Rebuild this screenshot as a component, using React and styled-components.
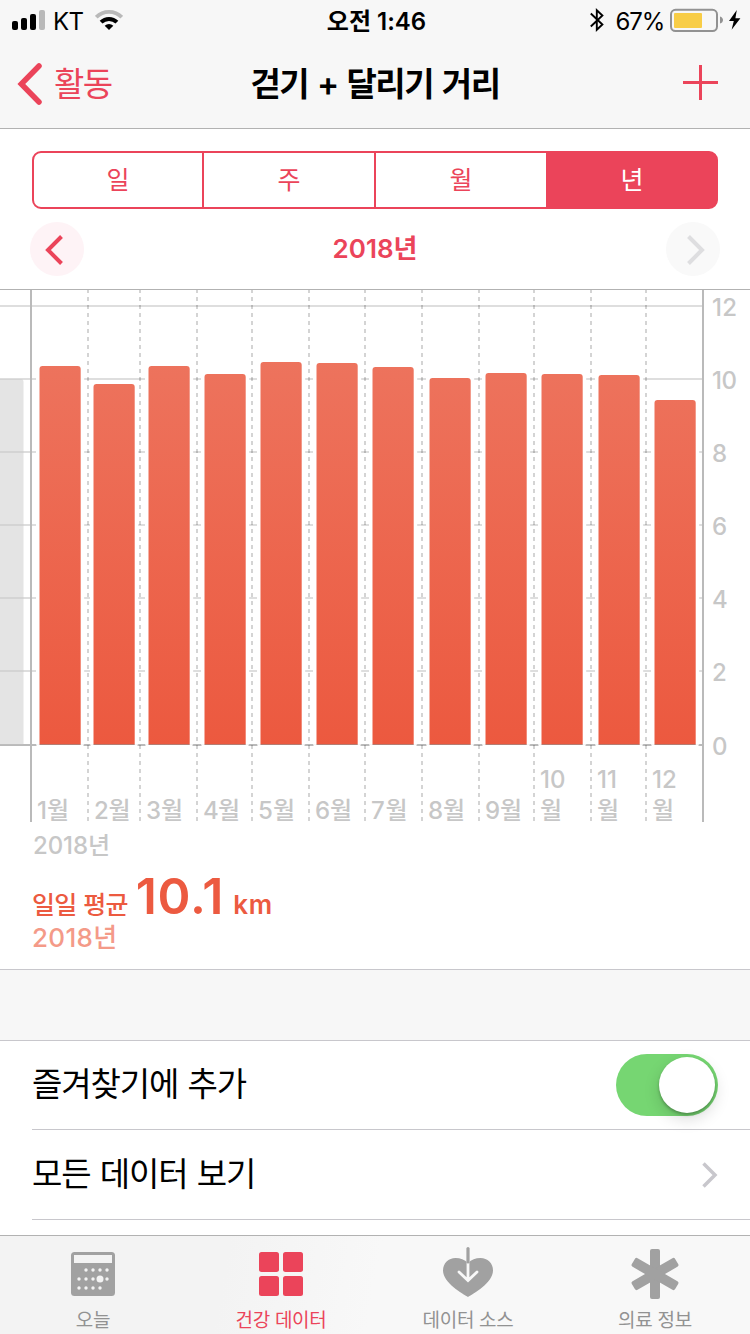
import React from 'react';
import styled, { createGlobalStyle, css } from 'styled-components';

const colors = {
  pink: '#eb445a',
  orange: '#ec5a40',
  bar: '#f7f7f7',
  line: '#c8c7cc',
  hairline: '#b2b2b2',
  axis: '#c7c7c7',
  grey: '#929292',
};

const fontStack = `Inter, 'Noto Sans CJK KR', sans-serif`;

const GlobalStyle = createGlobalStyle`
  * {
    box-sizing: border-box;
  }
  body {
    margin: 0;
    background: #fff;
    font-family: ${fontStack};
    color: #000;
  }
`;

const flexCenter = css`
  display: flex;
  align-items: center;
  justify-content: center;
`;

const Screen = styled.div`
  width: 750px;
  height: 1334px;
  overflow: hidden;
  display: flex;
  flex-direction: column;
  background: #fff;
`;

const Text = styled.span`
  display: block;
  white-space: nowrap;
  line-height: 1;
  font-size: ${p => p.$size}px;
  font-weight: ${p => p.$weight || 400};
  letter-spacing: ${p => p.$spacing || 0}px;
  word-spacing: ${p => p.$words || 0}px;
  color: ${p => p.$color || 'inherit'};
`;

const Header = styled.header`
  flex: none;
  height: 129px;
  background: ${colors.bar};
  border-bottom: 1px solid ${colors.hairline};
`;

const StatusBar = styled.div`
  display: grid;
  grid-template-columns: 1fr auto 1fr;
  align-items: center;
  height: 40px;
  padding: 0 9px 0 12px;

  ${Text} {
    padding-top: 3px;
  }
`;

const StatusGroup = styled.div`
  display: flex;
  align-items: center;
  justify-content: ${p => (p.$end ? 'flex-end' : 'flex-start')};
`;

const Carrier = styled(Text)`
  margin: 0 12px 0 8px;
`;

const Percent = styled(Text)`
  margin: 0 6px 0 12px;
`;

const NavBar = styled.nav`
  display: grid;
  grid-template-columns: 1fr auto 1fr;
  align-items: center;
  height: 88px;
  padding: 0 16px;

  ${Text} {
    padding-top: 1px;
  }
`;

const BackButton = styled.button`
  display: flex;
  align-items: center;
  gap: 10px;
  padding: 0;
  border: 0;
  background: none;
  font-family: inherit;
  color: ${colors.pink};
`;

const AddButton = styled(BackButton)`
  justify-self: end;
  margin: 0 16px 4px 0;
`;

const Segmented = styled.div`
  flex: none;
  display: grid;
  grid-template-columns: 170px 172px 172px 1fr;
  height: 58px;
  margin: 22px 32px 0;
  border: 2px solid ${colors.pink};
  border-radius: 9px;
  background: ${colors.pink};
  overflow: hidden;
`;

const Segment = styled.button`
  ${flexCenter};
  padding: 0;
  border: 0;
  border-right: ${p => (p.$active ? 0 : 2)}px solid ${colors.pink};
  background: ${p => (p.$active ? colors.pink : '#fff')};
  color: ${p => (p.$active ? '#fff' : colors.pink)};
  font-family: inherit;
`;

const DateNav = styled.div`
  flex: none;
  display: flex;
  align-items: center;
  justify-content: space-between;
  height: 54px;
  margin: 13px 30px 0;
`;

const RoundButton = styled.button`
  ${flexCenter};
  width: 54px;
  height: 54px;
  padding: ${p => (p.$disabled ? '2px 0 0 6px' : '2px 6px 0 0')};
  border: 0;
  border-radius: 50%;
  background: ${p => (p.$disabled ? '#f9f9f9' : '#fef3f6')};
  color: ${p => (p.$disabled ? '#dedee0' : colors.pink)};
`;

const ChartArea = styled.div`
  flex: none;
  height: 577px;
  margin-top: 13px;

  svg {
    display: block;
  }
`;

const Summary = styled.div`
  flex: none;
  height: 103px;
  padding: 5px 0 0 32px;
`;

const Average = styled.div`
  display: flex;
  align-items: baseline;
  height: 54px;
  color: ${colors.orange};
`;

const Amount = styled(Text)`
  margin: 0 9px 0 8px;
`;

const SectionGap = styled.div`
  flex: none;
  height: 72px;
  background: ${colors.bar};
  border: solid ${colors.line};
  border-width: 1px 0;
`;

const Row = styled.div`
  flex: none;
  display: flex;
  align-items: center;
  justify-content: space-between;
  height: ${p => p.$height}px;
  margin-left: 32px;
  padding-right: 32px;
  border-bottom: 1px solid ${colors.line};

  ${Text} {
    padding-bottom: 1px;
  }
`;

const Toggle = styled.button`
  display: flex;
  justify-content: flex-end;
  align-items: center;
  width: 102px;
  height: 62px;
  padding: 0 3px;
  border: 0;
  border-radius: 31px;
  background: #76d672;
`;

const Knob = styled.span`
  width: 56px;
  height: 56px;
  border-radius: 50%;
  background: #fff;
  box-shadow: 0 6px 16px rgba(0, 0, 0, 0.15), 0 2px 3px rgba(0, 0, 0, 0.25);
`;

const TabBar = styled.footer`
  flex: none;
  display: grid;
  grid-template-columns: 186px 190px 184px 190px;
  height: 99px;
  margin-top: 15px;
  border-top: 1px solid ${colors.hairline};
  background: linear-gradient(100deg, #f3f3f3 0%, #f3f3f3 30%, #f8f8f8 50%, #f8f8f8 100%);
`;

const Tab = styled.button`
  display: flex;
  flex-direction: column;
  align-items: center;
  gap: 13px;
  padding: 10px 0 0;
  border: 0;
  background: none;
  font-family: inherit;
  color: ${p => (p.$active ? colors.pink : colors.grey)};
`;

const SignalIcon = () => (
  <svg width="33" height="20" viewBox="0 0 33 20">
    <rect x="0" y="11" width="6" height="9" rx="2" />
    <rect x="9" y="8" width="6" height="12" rx="2" />
    <rect x="18" y="4" width="6" height="16" rx="2" />
    <rect x="27" y="0" width="6" height="20" rx="2" fill="#b9b9b9" />
  </svg>
);

const WifiIcon = () => (
  <svg width="28" height="20" viewBox="0 0 28 20" fill="none">
    <path d="M1.3 7.2a18 18 0 0 1 25.4 0" stroke="#b9b9b9" strokeWidth="3.8" />
    <path d="M6.1 12.2a11.2 11.2 0 0 1 15.8 0" stroke="#000" strokeWidth="4" />
    <path d="M14 20l-4.3-4.2a6.2 6.2 0 0 1 8.6 0z" fill="#000" />
  </svg>
);

const BluetoothIcon = () => (
  <svg width="14" height="24" viewBox="0 0 14 24" fill="none" stroke="#000" strokeWidth="1.9">
    <path d="M.8 5.5l11.6 11-5.6 5.2V2.3l5.6 5.2-11.6 11" />
  </svg>
);

const BatteryIcon = () => (
  <svg width="54" height="24" viewBox="0 0 54 24">
    <rect x="1" y="1.8" width="46" height="21.2" rx="4.5" fill="none" stroke="#929292" strokeWidth="2" />
    <rect x="4" y="5" width="28" height="15" rx="1" fill="#f8cd46" />
    <path d="M50 8.5c4 1 4 6 0 7z" fill="#929292" />
  </svg>
);

const BoltIcon = () => (
  <svg width="17" height="20" viewBox="-5 0 17 20">
    <path d="M7.8 0L0 11h4.800L2.600 19.800 11.400 8.200H6.400z" />
  </svg>
);

const BackIcon = () => (
  <svg width="28" height="44" viewBox="0 0 28 44" fill="none" stroke="currentColor" strokeWidth="5.5">
    <path d="M23 4L5.3 22 23 40" strokeLinecap="round" />
  </svg>
);

const PlusIcon = () => (
  <svg width="35" height="35" viewBox="0 0 35 35" fill="currentColor">
    <path d="M16 0h3v16h16v3H19v16h-3V19H0v-3h16z" />
  </svg>
);

const ChevronIcon = ({ right }) => (
  <svg width="18" height="30" viewBox="0 0 18 30" fill="none" stroke="currentColor" strokeWidth="4">
    <path d={right ? 'M1.5 1.5L15 15 1.5 28.5' : 'M16.5 1.5L3 15l13.5 13.5'} />
  </svg>
);

const DisclosureIcon = () => (
  <svg width="17" height="26" viewBox="0 0 17 26" fill="none" stroke={colors.line} strokeWidth="3.5">
    <path d="M2.5 1.5L14 13 2.5 24.5" />
  </svg>
);

const TodayIcon = () => (
  <svg width="50" height="52" viewBox="0 0 50 52">
    <rect x="3" y="6" width="44" height="44" rx="3.5" fill="#a1a1a1" />
    <rect x="6" y="9" width="38" height="8" fill="#f3f3f3" />
    <g fill="#f3f3f3">
      {[18, 25, 32, 39].map(x => (
        <circle key={x} cx={x} cy="24" r="1.7" />
      ))}
      {[11, 18, 25, 39].map(x => (
        <circle key={x} cx={x} cy="33" r="1.7" />
      ))}
      {[11, 18, 25, 32].map(x => (
        <circle key={x} cx={x} cy="42" r="1.7" />
      ))}
      <circle cx="32" cy="33" r="3.5" />
    </g>
  </svg>
);

const DataIcon = () => (
  <svg width="50" height="52" viewBox="0 0 50 52" fill="currentColor">
    <rect x="3" y="6" width="20" height="20" rx="2.5" />
    <rect x="27" y="6" width="20" height="20" rx="2.5" />
    <rect x="3" y="30" width="20" height="20" rx="2.5" />
    <rect x="27" y="30" width="20" height="20" rx="2.5" />
  </svg>
);

const SourcesIcon = () => (
  <svg width="50" height="52" viewBox="0 0 50 52" fill="none">
    <path
      d="M25 51C20 48 0 37 0 24.5 0 17 5.5 12 12.5 12c5 0 9 1.5 12.5 5 3.5-3.5 7.5-5 12.5-5C44.5 12 50 17 50 24.5 50 37 30 48 25 51z"
      fill="#a1a1a1"
    />
    <path d="M25 16.5V34M16 26l9 8.5 9-8.5" stroke="#f8f8f8" strokeWidth="2.8" strokeLinecap="round" />
    <path d="M25 2.5V16" stroke="#a1a1a1" strokeWidth="3.2" strokeLinecap="round" />
  </svg>
);

const MedicalIcon = () => (
  <svg width="50" height="52" viewBox="0 0 50 52" fill="#a1a1a1" overflow="visible">
    {[0, 60, 120].map(angle => (
      <rect key={angle} x="20" y="3" width="10" height="50" rx="2" transform={`rotate(${angle} 25 28)`} />
    ))}
  </svg>
);

const months = [
  { x: 39.5, top: 366, label: '1월', tx: 37, w: 32 },
  { x: 93.5, top: 384, label: '2월', tx: 94, w: 36.5 },
  { x: 148.5, top: 366, label: '3월', tx: 146, w: 37 },
  { x: 204.5, top: 374, label: '4월', tx: 203, w: 37 },
  { x: 260.5, top: 362, label: '5월', tx: 258, w: 37 },
  { x: 316.5, top: 363, label: '6월', tx: 315, w: 37 },
  { x: 372.5, top: 367, label: '7월', tx: 371, w: 36.5 },
  { x: 429.5, top: 378, label: '8월', tx: 428, w: 37 },
  { x: 485.5, top: 373, label: '9월', tx: 485, w: 37 },
  { x: 541.5, top: 374, label: '월', tx: 540, number: '10' },
  { x: 598.5, top: 375, label: '월', tx: 597, number: '11' },
  { x: 654.5, top: 400, label: '월', tx: 652, number: '12' },
];
const dividers = [88, 140, 197, 252, 309, 365, 422, 479, 534, 591, 646];
const gridLines = [
  { y: 306, value: 12 },
  { y: 379, value: 10 },
  { y: 452, value: 8 },
  { y: 525, value: 6 },
  { y: 598, value: 4 },
  { y: 671, value: 2 },
  { y: 745, value: 0 },
];

const roundedTop = (x, y, w, r = 3) =>
  `M${x} 744.5V${y + r}a${r} ${r} 0 0 1 ${r} ${-r}h${w - 2 * r}a${r} ${r} 0 0 1 ${r} ${r}V744.5z`;

const DistanceChart = () => (
  <svg
    width="750"
    height="577"
    viewBox="0 289 750 577"
    fontFamily={fontStack}
    fontSize="24"
    fontWeight="500"
    fill={colors.axis}
  >
    <defs>
      <linearGradient id="fill" gradientUnits="userSpaceOnUse" x1="0" x2="0" y1="362" y2="745">
        <stop offset="0" stopColor="#ed735d" />
        <stop offset="1" stopColor="#ec593f" />
      </linearGradient>
    </defs>
    <g stroke="#000" strokeWidth="2">
      {gridLines.map(({ y, value }) => (
        <path key={y} d={`M0 ${y}H703`} strokeOpacity={value ? 0.13 : 0.27} />
      ))}
      {dividers.map(x => (
        <path key={x} d={`M${x} 289V822`} strokeOpacity="0.17" strokeDasharray="4 4" />
      ))}
    </g>
    {/* last bar of the previous year */}
    <path d={roundedTop(-18, 379, 41.5)} fill="#c9c9c9" fillOpacity="0.5" />
    {/* white margin cuts the grid lines around every bar */}
    {months.map(({ x, top }) => (
      <g key={x}>
        <path d={roundedTop(x - 3.5, top - 3, 48.2)} fill="#fff" />
        <path d={`M${x - 3} 745.2h47`} stroke="#fff" strokeWidth="1.8" />
        <path d={roundedTop(x, top, 41.2)} fill="url(#fill)" />
        <path d={`M${x} 744.5h41.2`} stroke="#000" strokeOpacity="0.25" />
      </g>
    ))}
    <path d="M31 289V822M703 289V822" stroke="#bababa" strokeWidth="2" />
    <path d="M0 289.5H750" stroke={colors.hairline} />
    {gridLines.map(({ y, value }) => (
      <text key={y} x="712" y={y + 10} textLength={value > 9 ? 25 : undefined}>
        {value}
      </text>
    ))}
    {months.map(({ label, tx, w, number }) => (
      <g key={tx}>
        {number && (
          <text x={tx} y="788">
            {number}
          </text>
        )}
        <text x={tx} y="819" textLength={w}>
          {label}
        </text>
      </g>
    ))}
    <text x="33" y="854" textLength="77">
      2018년
    </text>
  </svg>
);

const App = () => (
  <Screen>
    <GlobalStyle />
    <Header>
      <StatusBar>
        <StatusGroup>
          <SignalIcon />
          <Carrier $size={24} $spacing={-0.7}>
            KT
          </Carrier>
          <WifiIcon />
        </StatusGroup>
        <Text $size={24} $weight={600}>
          오전 1:46
        </Text>
        <StatusGroup $end>
          <BluetoothIcon />
          <Percent $size={24} $spacing={-1.2}>
            67%
          </Percent>
          <BatteryIcon />
          <BoltIcon />
        </StatusGroup>
      </StatusBar>
      <NavBar>
        <BackButton>
          <BackIcon />
          <Text $size={33} $spacing={-1.5}>
            활동
          </Text>
        </BackButton>
        <Text $size={33} $weight={600} $spacing={-1.5} $words={2}>
          걷기 + 달리기 거리
        </Text>
        <AddButton>
          <PlusIcon />
        </AddButton>
      </NavBar>
    </Header>

    <Segmented>
      {['일', '주', '월', '년'].map(label => (
        <Segment key={label} $active={label === '년'}>
          <Text $size={25}>{label}</Text>
        </Segment>
      ))}
    </Segmented>

    <DateNav>
      <RoundButton>
        <ChevronIcon />
      </RoundButton>
      <Text $size={26} $weight={600} $color={colors.pink}>
        2018년
      </Text>
      <RoundButton $disabled>
        <ChevronIcon right />
      </RoundButton>
    </DateNav>

    <ChartArea>
      <DistanceChart />
    </ChartArea>

    <Summary>
      <Average>
        <Text $size={25} $weight={500} $spacing={-0.8} $words={1}>
          일일 평균
        </Text>
        <Amount $size={50} $weight={600} $spacing={0.8}>
          10.1
        </Amount>
        <Text $size={26} $weight={600} $spacing={0.8}>
          km
        </Text>
      </Average>
      <Text $size={26} $weight={500} $spacing={0.3} $color="#f49a88">
        2018년
      </Text>
    </Summary>

    <SectionGap />
    <Row $height={89}>
      <Text $size={33} $spacing={-1.1} $words={1}>
        즐겨찾기에 추가
      </Text>
      <Toggle>
        <Knob />
      </Toggle>
    </Row>
    <Row $height={90}>
      <Text $size={33} $spacing={-1.1} $words={1}>
        모든 데이터 보기
      </Text>
      <DisclosureIcon />
    </Row>

    <TabBar>
      <Tab>
        <TodayIcon />
        <Text $size={19} $spacing={-0.3}>
          오늘
        </Text>
      </Tab>
      <Tab $active>
        <DataIcon />
        <Text $size={19} $spacing={-0.3}>
          건강 데이터
        </Text>
      </Tab>
      <Tab>
        <SourcesIcon />
        <Text $size={19} $spacing={-0.3}>
          데이터 소스
        </Text>
      </Tab>
      <Tab>
        <MedicalIcon />
        <Text $size={19} $spacing={-0.3}>
          의료 정보
        </Text>
      </Tab>
    </TabBar>
  </Screen>
);

export default App;
